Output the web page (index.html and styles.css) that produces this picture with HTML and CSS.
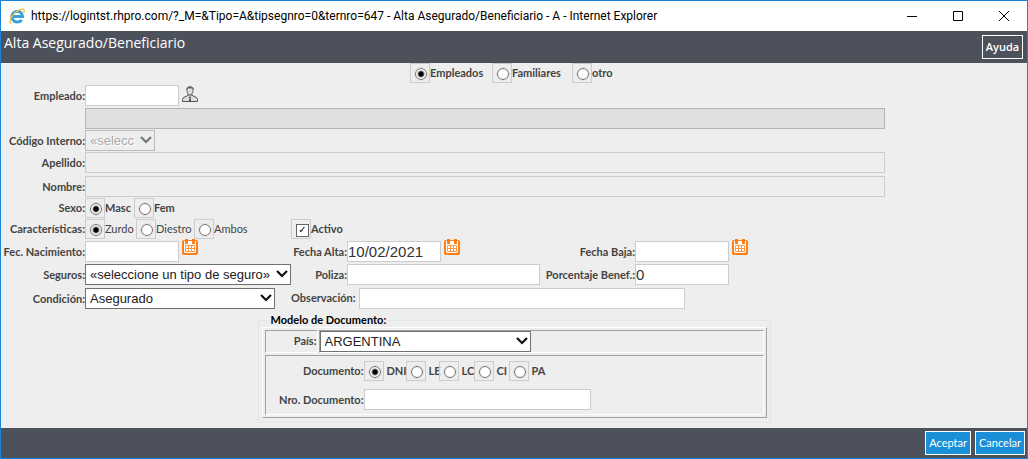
FILE: index.html
```html
<!DOCTYPE html>
<html lang="es">
<head>
<meta charset="utf-8">
<title>Alta Asegurado/Beneficiario</title>
<link rel="stylesheet" href="styles.css">
</head>
<body>
<svg width="0" height="0" class="sprite" aria-hidden="true">
  <symbol id="calendar" viewBox="0 0 16 16">
    <path fill="#ff7f16" d="M2 1h12a2 2 0 0 1 2 2v11a2 2 0 0 1-2 2H2a2 2 0 0 1-2-2V3a2 2 0 0 1 2-2zM3 0h3v2H3zM10 0h3v2h-3z"/>
    <path fill="#fff" d="M2 5h12v8l-1 1H3l-1-1zM2 2h1v3H2zM6 2h4v3H6zM13 2h1v3h-1z"/>
    <path fill="none" stroke="#ff9a48" d="M3.500 6.500h9v6h-9zM3.500 9.500h9M6.500 6.500v6M9.500 6.500v6"/>
  </symbol>
  <symbol id="chevron" viewBox="0 0 12 8">
    <path fill="none" stroke="currentColor" stroke-width="2.200" d="M1 1l5 5 5-5"/>
  </symbol>
</svg>
<div class="window">
  <div class="titlebar">
    <svg class="ie" viewBox="0 0 16 16" aria-hidden="true">
      <path fill="none" stroke="#39a0dc" stroke-width="3" d="M3.500 8.600H13.600A5.400 5.400 0 1 0 12.600 11.800"/>
      <path fill="none" stroke="#f3c13a" stroke-width="1.300" d="M2.500 15.200C-.5 15.200 1 10 5 5.800S14 .2 15 1.600c.6.900.2 2-.4 3"/>
    </svg>
    <span class="address">https://logintst.rhpro.com/?_M=&amp;Tipo=A&amp;tipsegnro=0&amp;ternro=647 - Alta Asegurado/Beneficiario - A - Internet Explorer</span>
    <button class="winbtn" aria-label="Minimizar"><svg viewBox="0 0 10 10"><path d="M0 5.500h10"/></svg></button>
    <button class="winbtn" aria-label="Maximizar"><svg viewBox="0 0 10 10"><path d="M.5.500h9v9h-9z"/></svg></button>
    <button class="winbtn" aria-label="Cerrar"><svg viewBox="0 0 10 10"><path d="M0 0l10 10M10 0L0 10"/></svg></button>
  </div>
  <header class="header">
    <h1>Alta Asegurado/Beneficiario</h1>
    <button class="help">Ayuda</button>
  </header>
  <form class="form">
    <div class="choices kinds">
      <label><input type="radio" name="kind" checked>Empleados</label>
      <label><input type="radio" name="kind">Familiares</label>
      <label><input type="radio" name="kind">otro</label>
    </div>
    <div class="row gap2">
      <label for="emp">Empleado:</label>
      <div class="cell"><input class="short" id="emp" type="text">
        <button type="button" class="iconbtn" aria-label="Buscar empleado"><svg viewBox="0 0 16 16">
          <path fill="#ddd" stroke="#666" d="M5 2Q8-.8 11 2V5.500Q10.500 8.500 8 9Q5.500 8.500 5 5.500z"/>
          <path fill="#666" d="M4.500 4V2Q8-1.500 11.500 2V4L10 2.500H6z"/>
          <path fill="#ddd" stroke="#555" d="M6 8.500L5 10Q.5 11 .5 13.500v2h15v-2Q15.500 11 11 10L10 8.500L8 10.500z"/>
          <path fill="#444" d="M7 11h2l-.5 1 .5 3H7l.5-3z"/>
        </svg></button></div>
    </div>
    <div class="row gap2"><span></span><input class="wide shaded" type="text" aria-label="Nombre del empleado" disabled></div>
    <div class="row gap1">
      <label for="cod">Código Interno:</label>
      <div class="select code"><select id="cod" disabled><option>«selecc</option></select><svg><use href="#chevron"/></svg></div>
    </div>
    <div class="row gap1"><label for="ape">Apellido:</label><input class="wide" id="ape" type="text" disabled></div>
    <div class="row gap3"><label for="nom">Nombre:</label><input class="wide" id="nom" type="text" disabled></div>
    <div class="row gap1">
      <span class="name" id="sexo">Sexo:</span>
      <div class="choices sex" role="radiogroup" aria-labelledby="sexo">
        <label><input type="radio" name="sex" checked>Masc</label>
        <label><input type="radio" name="sex">Fem</label>
      </div>
    </div>
    <div class="row gap1">
      <span class="name" id="car">Características:</span>
      <div class="choices hand" role="radiogroup" aria-labelledby="car">
        <label><input type="radio" name="hand" checked>Zurdo</label>
        <label><input type="radio" name="hand">Diestro</label>
        <label><input type="radio" name="hand">Ambos</label>
      </div>
      <div class="choices active"><label><input type="checkbox" checked>Activo</label></div>
    </div>
    <div class="row gap2">
      <label for="nac">Fec. Nacimiento:</label>
      <div class="cell"><input class="short" id="nac" type="text"><button type="button" class="iconbtn date" aria-label="Calendario"><svg><use href="#calendar"/></svg></button></div>
      <label for="alta">Fecha Alta:</label>
      <div class="cell"><input class="short" id="alta" type="text" value="10/02/2021"><button type="button" class="iconbtn date" aria-label="Calendario"><svg><use href="#calendar"/></svg></button></div>
      <label for="baja">Fecha Baja:</label>
      <div class="cell"><input class="short" id="baja" type="text"><button type="button" class="iconbtn date" aria-label="Calendario"><svg><use href="#calendar"/></svg></button></div>
    </div>
    <div class="row gap2">
      <label for="seg">Seguros:</label>
      <div class="select insurance"><select id="seg"><option>«seleccione un tipo de seguro»</option></select><svg><use href="#chevron"/></svg></div>
      <label for="pol">Poliza:</label>
      <input id="pol" type="text">
      <label for="por">Porcentaje Benef.:</label>
      <input class="short" id="por" type="text" value="0">
    </div>
    <div class="row gap3">
      <label for="con">Condición:</label>
      <div class="select condition"><select id="con"><option>Asegurado</option></select><svg><use href="#chevron"/></svg></div>
      <div class="notes"><label for="obs">Observación:</label><input id="obs" type="text"></div>
    </div>
    <fieldset class="model">
      <legend>Modelo de Documento:</legend>
      <div class="panel">
        <div class="country">
          <label class="inset" for="pais">País:</label>
          <div class="inset"><div class="select nation"><select id="pais"><option>ARGENTINA</option></select><svg><use href="#chevron"/></svg></div></div>
        </div>
        <div class="inset document">
          <span class="name" id="doc">Documento:</span>
          <div class="choices docs" role="radiogroup" aria-labelledby="doc">
            <label><input type="radio" name="doc" checked>DNI</label>
            <label><input type="radio" name="doc">LE</label>
            <label><input type="radio" name="doc">LC</label>
            <label><input type="radio" name="doc">CI</label>
            <label><input type="radio" name="doc">PA</label>
          </div>
          <label for="nro">Nro. Documento:</label>
          <input id="nro" type="text">
        </div>
      </div>
    </fieldset>
  </form>
  <footer class="footer">
    <button>Aceptar</button>
    <button>Cancelar</button>
  </footer>
</div>
</body>
</html>
```
FILE: styles.css
```css
* { box-sizing: border-box; }

body { margin: 0; }

.sprite { display: none; }

.window {
  min-height: 100vh;
  display: flex;
  flex-direction: column;
  border: 1px solid #1883d7;
  background: #eee;
  color: #444;
  font: bold 11px/20px Lato, "Open Sans", sans-serif;
}

button {
  margin: 0;
  padding: 0;
  border: 0;
  background: none;
  font: inherit;
}

.titlebar {
  display: flex;
  align-items: center;
  height: 30px;
  padding-left: 8px;
  background: #fff;
  color: #000;
  font: 12px/20px Roboto, sans-serif;
}

.ie { width: 16px; height: 16px; margin-right: 6px; flex: none; }

.address { flex: 1; white-space: nowrap; overflow: hidden; }

.winbtn { width: 46px; height: 30px; display: grid; place-items: center; }

.winbtn svg { width: 10px; height: 10px; overflow: visible; }

.winbtn path { fill: none; stroke: #000; }

.header {
  display: flex;
  justify-content: space-between;
  height: 32px;
  padding: 4px 4px 4px 3px;
  background: #4d515c;
  color: #fff;
}

.header h1 { margin: 0; font: 14px/16px "Open Sans", sans-serif; }

.help {
  width: 41px;
  height: 24px;
  border: 1px solid #fff;
  color: #fff;
  font: 600 11px/20px "Open Sans", sans-serif;
}

.form { flex: 1; margin: 0; }

input[type="text"] {
  width: 100%;
  height: 21px;
  min-width: 0;
  margin: 0;
  padding: 0;
  border: 1px solid #ccc;
  border-radius: 0;
  background: #fff;
  color: #333;
  font: 15px/18px "Liberation Sans", Arial, sans-serif;
}

input[type="text"].short { width: 94px; }

input[type="text"].wide { grid-column: 2 / -1; max-width: 800px; }

input[type="text"]:disabled { background: #eee; }

input[type="text"].shaded { background: #dfdfdd; border-color: #b4b4b4; }

.row {
  display: grid;
  grid-template-columns: 84px 206px 56px 193px 95px 1fr;
  align-items: center;
}

.gap1 { margin-top: 1px; }
.gap2 { margin-top: 2px; }
.gap3 { margin-top: 3px; }

.row > label, .row > .name, .document > label, .document > .name {
  justify-self: end;
  white-space: nowrap;
}

.cell { display: flex; }

.iconbtn { width: 16px; height: 16px; margin: 1px 0 0 3px; }

.iconbtn.date { margin-top: -2px; }

.iconbtn svg { display: block; width: 16px; height: 16px; }

.choices { display: grid; white-space: nowrap; justify-content: start; }

.choices label { display: flex; }

.kinds { justify-content: center; grid-template-columns: 82px 80px 46px; }
.sex { grid-template-columns: 49px auto; }
.hand { grid-template-columns: 51px 58px auto; font-weight: normal; }
.docs { grid-template-columns: 42px 33px 35px 35px auto; }
.docs label { gap: 3px; }

input[type="radio"], input[type="checkbox"] {
  appearance: none;
  flex: none;
  width: 20px;
  height: 20px;
  margin: 0;
  border: 1px solid #ccc;
  padding: 4px;
}

input[type="radio"]::before, input[type="checkbox"]::before {
  content: "";
  display: block;
  width: 11px;
  height: 11px;
  border: 1px solid #666;
  background: #fff;
}

input[type="radio"]::before { width: 10px; height: 10px; border-radius: 50%; outline: 1px solid #e0e0e0; }

input[type="radio"]:checked::before {
  background: radial-gradient(circle, #000 2px, #fff 4px);
}

input[type="checkbox"]::before {
  content: "✓";
  color: #000;
  font: bold 10px/9px "DejaVu Sans", sans-serif;
  text-align: center;
}

.select { position: relative; }

.select select {
  appearance: none;
  display: block;
  width: 100%;
  height: 21px;
  padding: 0 18px 0 4px;
  border: 1px solid #707070;
  border-radius: 0;
  background: #fff;
  color: #222;
  font: 13px/18px "Liberation Sans", Arial, sans-serif;
}

.select svg {
  position: absolute;
  top: 6px;
  right: 3px;
  width: 12px;
  height: 8px;
  color: #111;
  pointer-events: none;
}

.select select:disabled {
  opacity: 1;
  border-color: #bbb;
  background: #eee;
  color: #aaa;
  text-shadow: 1px 1px #fff;
}

.select select:disabled + svg { color: #777; }

.code { width: 70px; }
.insurance { width: 206px; }
.condition { width: 190px; }
.nation { width: 211px; }

.notes {
  grid-column: 3 / -1;
  display: grid;
  grid-template-columns: 68px minmax(0, 326px);
}

.model {
  max-width: 513px;
  margin: 4px auto 5px;
  padding: 0 3px 4px;
  border: 1px solid #e5e5e5;
}

.model legend { margin-left: 7px; padding: 0 2px; color: #000; line-height: 14px; }

.panel {
  display: grid;
  gap: 2px;
  padding: 2px;
  border: 1px solid;
  border-color: #fff #a0a0a0 #a0a0a0 #fff;
}

.country { display: grid; grid-template-columns: 53px 1fr; gap: 1px; }

.country > label { text-align: right; }

.inset { border: 1px solid; border-color: #a0a0a0 #fff #fff #a0a0a0; }

.document {
  display: grid;
  grid-template-columns: 98px minmax(0, 227px);
  row-gap: 8px;
  padding: 5px 0 4px;
  align-items: center;
}

.footer {
  display: flex;
  justify-content: flex-end;
  gap: 4px;
  height: 30px;
  padding: 3px 2px;
  background: #4d515c;
}

.footer button {
  height: 24px;
  padding: 0 3px;
  border: 1px solid #fff;
  background: #1a8fd8;
  color: #fff;
  font: 11px/20px Lato, sans-serif;
}
```
